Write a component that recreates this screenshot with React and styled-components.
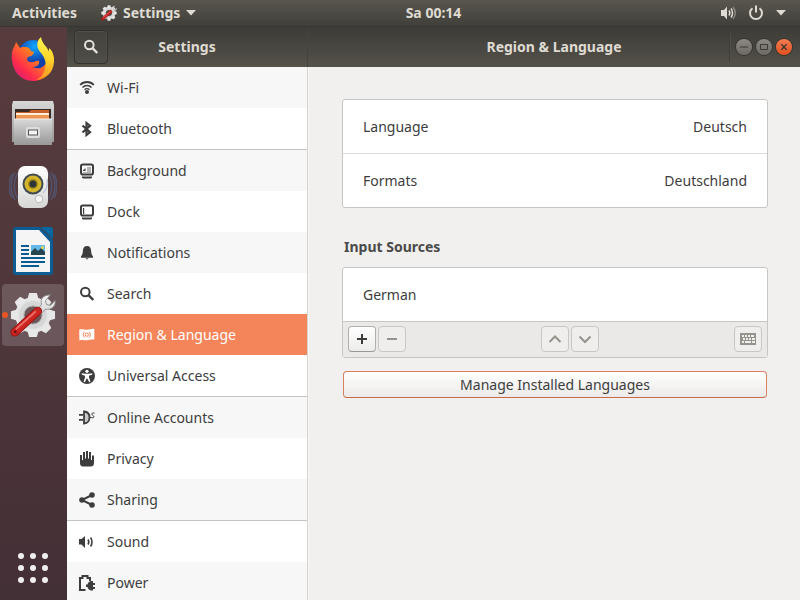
import React from "react";
import styled, { createGlobalStyle, css } from "styled-components";

const GlobalStyle = createGlobalStyle`
  *, *::before, *::after { box-sizing: border-box; }
  body { margin: 0; overflow: hidden; }
  body, button { font-family: "Noto Sans", "Open Sans", sans-serif; font-size: 14px; line-height: 20px; color: #3d3d3d; }
  button { margin: 0; padding: 0; border: 0; background: none; }
  a { color: inherit; text-decoration: none; }
  ul { list-style: none; margin: 0; padding: 0; }
  h1, h2 { margin: 0; font-size: 14px; line-height: 20px; }
  svg { display: block; flex: none; }
`;

const Desktop = styled.div`
  height: 100vh;
  display: flex;
  flex-direction: column;
`;

const TopBar = styled.header`
  flex: none;
  height: 27px;
  display: grid;
  grid-template-columns: 67px 1fr auto 1fr;
  align-items: center;
  background: linear-gradient(#59564e, #403f3a);
  border-bottom: 1px solid #383732;
`;

const barItem = css`
  display: flex;
  align-items: center;
  font-size: 14px;
  font-weight: 700;
  color: #dfdbd2;
`;

const BarStart = styled.div`
  grid-column: 1 / 3;
  grid-row: 1;
  display: flex;
  gap: 24px;
  padding-left: 12px;
`;

const BarButton = styled.button`
  ${barItem}
  gap: 6px;
`;

const Clock = styled.button`
  ${barItem}
  grid-column: 3;
  grid-row: 1;
`;

const StatusMenu = styled.button`
  ${barItem}
  grid-column: 4;
  grid-row: 1;
  justify-self: end;
  gap: 12px;
  padding-right: 14px;
`;

const Workspace = styled.div`
  flex: 1;
  min-height: 0;
  display: flex;
`;

const Dock = styled.nav`
  flex: none;
  width: 67px;
  display: flex;
  flex-direction: column;
  justify-content: space-between;
  padding: 1px 3px 17px 2px;
  background: linear-gradient(#573c3d, #4e363a 55%, #432f36);
`;

const DockList = styled.ul`
  display: flex;
  flex-direction: column;
  gap: 2px;
`;

const DockItem = styled.button`
  position: relative;
  width: 62px;
  height: 62px;
  display: grid;
  place-items: center;
  border-radius: 4px;
  background: ${(p) => (p.$active ? "rgba(255, 255, 255, 0.17)" : "none")};
`;

const RunningDot = styled.span`
  position: absolute;
  left: 0;
  top: 28px;
  width: 6px;
  height: 6px;
  border-radius: 3px;
  background: #e95420;
`;

const AppsButton = styled.button`
  align-self: center;
  display: grid;
  grid-template-columns: repeat(3, 6px);
  gap: 6px;
`;

const Dot = styled.span`
  height: 6px;
  border-radius: 3px;
  background: #f0eeee;
`;

const Window = styled.div`
  flex: 1;
  min-width: 0;
  display: grid;
  grid-template-columns: 241px 1fr;
  grid-template-rows: 40px minmax(0, 1fr);
  background: #f1f0ee;
`;

const HeaderPane = styled.div`
  display: grid;
  grid-template-columns: 1fr auto 1fr;
  align-items: center;
  padding: 0 7px;
  color: #dfdbd2;
  background: linear-gradient(#3c3b37, #55524a);
  border-right: ${(p) => (p.$divided ? "1px solid #45433d" : "0")};
`;

const SearchButton = styled.button`
  width: 34px;
  height: 34px;
  display: grid;
  place-items: center;
  border: 1px solid #33322e;
  border-radius: 4px;
  background: linear-gradient(#43423d, #4f4d46);
  box-shadow: inset 0 0 0 1px #504e47;
  color: #e6e2da;
`;

const WindowTitle = styled.h1`
  grid-column: 2;
  font-size: 14px;
  font-weight: 700;
`;

const WindowControls = styled.div`
  justify-self: end;
  display: flex;
  align-items: center;
  gap: 4px;
  height: 28px;
  padding: 0 1px 0 6px;
  border-left: 1px solid #3f3e39;
  box-shadow: inset 1px 0 #504e47;
`;

const ControlButton = styled.button`
  width: 16px;
  height: 16px;
  display: grid;
  place-items: center;
  border-radius: 8px;
  box-shadow: 0 0 0 1px #35342f;
  color: #3a3934;
  background: ${(p) => (p.$close ? "linear-gradient(#f67b52, #e4511d)" : "linear-gradient(#8b8982, #6b6962)")};
`;

const Sidebar = styled.nav`
  min-height: 0;
  overflow: hidden;
  background: #fff;
  border-right: 1px solid #d5d3d0;
`;

const NavGroup = styled.ul`
  & + & { border-top: 1px solid #c6c4c2; }
`;

const NavLink = styled.a`
  height: 41px;
  display: flex;
  align-items: center;
  gap: 12px;
  padding: 0 12px;
  color: ${(p) => (p.$selected ? "#fff" : "#3d3d3d")};
  background: ${(p) => (p.$selected ? "#f4845a" : p.$shaded ? "#f7f7f7" : "#fff")};
`;

const Content = styled.main`
  min-width: 0;
  padding: 32px 32px 0 34px;
  box-shadow: inset 1px 0 #f8f7f6;
`;

const Card = styled.div`
  border: 1px solid #c8c6c4;
  border-radius: 3px;
  background: #fff;
  overflow: hidden;
`;

const CardRow = styled.button`
  width: 100%;
  height: 53px;
  display: flex;
  align-items: center;
  justify-content: space-between;
  padding: 0 20px;

  & + & {
    height: 54px;
    border-top: 1px solid #dddcda;
  }
`;

const SectionTitle = styled.h2`
  margin: 29px 0 10px 2px;
  color: #4a4a4a;
`;

const Toolbar = styled.div`
  display: flex;
  align-items: center;
  justify-content: space-between;
  height: 36px;
  padding: 0 5px 1px;
  border-top: 1px solid #c8c6c4;
  background: #eae9e7;
`;

const ToolGroup = styled.div`
  display: flex;
  gap: 2px;
`;

const ToolButton = styled.button`
  width: 28px;
  height: 26px;
  display: grid;
  place-items: center;
  border: 1px solid #b3afab;
  border-bottom-color: #9b9793;
  border-radius: 4px;
  color: #3d3d3d;
  background: linear-gradient(#fff, #ececea);

  &:disabled {
    border-color: #c9c7c4;
    color: #96928c;
    background: #efeeed;
  }
`;

const ManageButton = styled.button`
  display: block;
  width: calc(100% - 2px);
  height: 27px;
  margin: 13px 1px 0;
  border: 1px solid #d9805f;
  border-bottom-color: #c96a49;
  border-radius: 4px;
  background: linear-gradient(#fff, #ebeae8);
`;

const Icon = ({ size = 16, children }) => (
  <svg width={size} height={size} viewBox="0 0 16 16" fill="currentColor" aria-hidden="true">
    {children}
  </svg>
);

const line = { fill: "none", stroke: "currentColor", strokeWidth: 2 };

const icons = {
  wifi: (
    <>
      <g {...line} strokeWidth="1.8">
        <path d="M1.2 5C4.8 1 11.2 1 14.8 5" />
        <path d="M3.5 7.600C6 4.900 10 4.900 12.5 7.600" strokeWidth="1.5" />
        <path d="M5.500 9.800C7 8.400 9 8.400 10.500 9.800" strokeWidth="1.3" />
      </g>
      <circle cx="8" cy="12" r="2" />
    </>
  ),
  bluetooth: <path d="M3.500 4.500 11 11.300 7.500 14V2L11 4.700 3.500 11.500" {...line} strokeWidth="2.200" />,
  background: (
    <>
      <rect x="2" y="1.500" width="12" height="10" rx="1.800" {...line} />
      <path d="M3 13.500h10v1l-1 1H4l-1-1z" />
      <path d="M8 4h4v6H4V9h4z" opacity=".35" />
      <path d="M4 7.500 6.500 5v3H4z" />
    </>
  ),
  dock: (
    <>
      <rect x="2" y="1.500" width="12" height="10" rx="1.800" {...line} />
      <path d="M4 4h1.200v6H4z" />
      <path d="M3 13.500h10v1l-1 1H4l-1-1z" />
    </>
  ),
  bell: <path d="M8 1C5.200 1 4.100 3 3.900 5.800 3.700 8.600 3.300 10.200 2 11.200V12.800H14V11.200C12.700 10.200 12.300 8.600 12.100 5.800 11.900 3 10.800 1 8 1zM6.500 13.300h3c-.3.800-.8 1.100-1.500 1.100s-1.200-.3-1.500-1.100z" />,
  search: (
    <>
      <circle cx="6.300" cy="6" r="4.300" {...line} />
      <path d="m9.500 9.200 4.800 4.800" {...line} strokeWidth="2.400" />
    </>
  ),
  region: (
    <>
      <path d="M.3 2.600C3 1.600 5 2.800 8 2.800s4.500-1.400 7.300-.8v10.800c-2.800-.6-4.300.4-7.300.4s-5-.8-7.700.3z" />
      <g fill="none" stroke="#f4845a">
        <circle cx="7.800" cy="7.700" r="1.600" />
        <path d="M5.600 4.800A3.900 3.900 0 0 0 5.600 10.600M10 4.800a3.900 3.900 0 0 1 0 5.800" />
      </g>
    </>
  ),
  access: (
    <>
      <circle cx="8" cy="8" r="8" />
      <circle cx="8" cy="3.300" r="1.600" fill="#fff" />
      <path d="M2.800 5.300 6.500 5.800h3l3.700-.5.200 1.200-3.400 1.200v1.800l1.500 4.200-1.300.5L8.300 10.500h-.6l-1.900 3.700-1.300-.5L6 9.500V7.700L2.600 6.500z" fill="#fff" />
    </>
  ),
  online: (
    <>
      <path d="M0 4h4v1.700H0zM0 9h4v1.700H0z" />
      <path d="M5 1.500v12c3.700-.3 5.500-2.800 5.500-6S8.700 1.800 5 1.500z" fillOpacity=".25" stroke="currentColor" strokeWidth="1.800" />
      <path d="M10.500 7.500h1.500M15.600 3.200c-2-.8-3 .1-2.700 1.300.3 1 2 1 2 2.200 0 1.200-1.400 1.500-2.800.8" fill="none" stroke="currentColor" />
    </>
  ),
  privacy: <path d="M1 4h2v5h1V1h2v6.500h1V0h2v7.500h1V1h2v8h1V4.500h2V12c0 2-1 3.500-3 3.500H4c-2 0-3-1.500-3-3.200z" />,
  sharing: (
    <>
      <path d="M13 3 3 8l10 5" {...line} />
      <circle cx="13" cy="3" r="2.800" />
      <circle cx="3" cy="8" r="2.800" />
      <circle cx="13" cy="13" r="2.800" />
    </>
  ),
  sound: (
    <>
      <path d="M0 5h2.500L6 2v12l-3.500-3.500H0z" />
      <path d="M9 5.500c1 1.500 1 3.500 0 5M11.500 3.500c2 2.500 2 6.500 0 9" {...line} strokeWidth="1.600" />
    </>
  ),
  power: (
    <>
      <path d="M6.500 15H1V3h2.500V1h5v2H11v3" {...line} />
      <path d="M7 9.500h1.500C9 7.500 10.500 6 12.500 6H14v2h2v2h-2v2h2v2h-2v1.500h-1.500c-2 0-3.500-1.500-4-3.500H7z" />
    </>
  ),
};

const GearTool = ({ size }) => (
  <svg width={size} height={size} viewBox="0 0 48 48" aria-hidden="true">
    <defs>
      <linearGradient id="gear" x2="0" y2="1"><stop stopColor="#f8f8f8" /><stop offset="1" stopColor="#d0d0d0" /></linearGradient>
    </defs>
    <circle cx="24" cy="24" r="14" fill="none" stroke="#e4e4e4" strokeWidth="9" />
    <g fill="#e8e8e8">
      {[0, 45, 90, 135, 180, 225, 270, 315].map((a) => (
        <path key={a} d="M18 8 20 1h8l2 7z" transform={`rotate(${a} 24 24)`} />
      ))}
    </g>
    <circle cx="24" cy="24" r="12" fill="none" stroke="#d6d6d6" strokeWidth="5" />
    <circle cx="24" cy="24" r="9.500" fill="none" stroke="#aaa" />
    <path d="M28 19 33 13c-2-6 2-10 9-10l-5 6 1 4 4 1 5-5c1 6-4 10-10 9l-6 6z" fill="url(#gear)" stroke="#8d8d8d" />
    <path d="M5 42 29 20" fill="none" stroke="#941414" strokeWidth="9" strokeLinecap="round" />
    <path d="M5 42 29 20" fill="none" stroke="#cb2421" strokeWidth="7" strokeLinecap="round" />
    <path d="M27 20 6 39" stroke="#ee6e65" strokeWidth="2" />
    <circle cx="5.500" cy="41.500" r="1.600" fill="#6b1515" />
  </svg>
);

const Firefox = () => (
  <svg width="46" height="46" viewBox="0 0 46 46" aria-hidden="true">
    <defs>
      <linearGradient id="fox" x1="0" y1="1" x2="1" y2="0"><stop stopColor="#c0168c" /><stop offset=".3" stopColor="#ff2c4b" /><stop offset=".65" stopColor="#ff8a1c" /><stop offset="1" stopColor="#ffe226" /></linearGradient>
      <linearGradient id="tail" x2="0" y2="1"><stop stopColor="#fff44f" /><stop offset=".5" stopColor="#ffd52c" /><stop offset="1" stopColor="#ff9520" /></linearGradient>
      <radialGradient id="globe" cx=".55" cy=".2"><stop stopColor="#10a8ff" /><stop offset="1" stopColor="#113fa8" /></radialGradient>
    </defs>
    <circle cx="23" cy="20" r="16" fill="url(#globe)" />
    <path d="M2 24C1 17 3 12 5 9l1-3 4 6c3-2 6-1 9 0l2 3 3 1c-1 4-3 4-6 5-2 3 0 5 3 5 3 1 5-2 8-1 1 3-2 6-6 6 5 3 13 1 14-8 1-7-6-11-6-16 4 2 9 8 12 18 1 10-8 20-20 20S3 36 2 24z" fill="url(#fox)" />
    <path d="M31 1c-5 4-5 11 0 16 5 6 6 13 3 19-1 3-4 6-8 8 12-1 19-10 18-22-1-5-2-8-5-10v4c-2-6-7-8-8-15z" fill="url(#tail)" />
  </svg>
);

const Files = () => (
  <svg width="44" height="46" viewBox="0 0 44 46" aria-hidden="true">
    <defs>
      <linearGradient id="cabinet" x2="0" y2="1"><stop stopColor="#d8d8d8" /><stop offset="1" stopColor="#989898" /></linearGradient>
    </defs>
    <path d="M2 1h40l1 4v37H1V5z" fill="url(#cabinet)" />
    <path d="M4 9h36v12H4z" fill="#3a2a22" />
    <path d="M5 12h13l2-2h18v10H5z" fill="#c8622a" />
    <path d="M5 13h33v2H5z" fill="#fff0dc" />
    <path d="M5 15h33v4H5z" fill="#ee9450" />
    <path d="M3 19h38v26H3z" fill="url(#cabinet)" />
    <path d="M3 19h38" stroke="#eee" />
    <rect x="15" y="27" width="14" height="11" rx="2" fill="#ddd" />
    <rect x="17.500" y="30" width="9" height="5" fill="#f4f4f4" stroke="#555" />
  </svg>
);

const Rhythmbox = () => (
  <svg width="48" height="46" viewBox="0 0 48 46" aria-hidden="true">
    <defs>
      <linearGradient id="speaker" x2="0" y2="1"><stop stopColor="#fff" /><stop offset="1" stopColor="#d6d6d4" /></linearGradient>
    </defs>
    <g fill="none" stroke="#5272a8" strokeWidth="1.500" opacity=".45">
      <path d="M9 9c-5 8-5 18 0 26M6 8c-5 9-5 19 0 28M3 10c-4 8-4 16 0 24M39 9c5 8 5 18 0 26M42 8c5 9 5 19 0 28M45 10c4 8 4 16 0 24" />
    </g>
    <rect x="9" y="2" width="30" height="42" rx="7" fill="url(#speaker)" />
    <circle cx="24" cy="20" r="10.500" fill="#424b51" />
    <circle cx="24" cy="20" r="8.500" fill="#d3b62d" />
    <circle cx="24" cy="20" r="5" fill="#a5880f" />
    <circle cx="24" cy="20" r="3.500" fill="#2c343c" />
    <circle cx="30" cy="35" r="3.800" fill="#f4f4f4" stroke="#bbb" />
    <rect x="14" y="33" width="5" height="5" rx="1" fill="#ddd" />
    <path d="M34 29c4-4 5-9 4-14" fill="none" stroke="#b9c6dc" strokeWidth="1.500" />
  </svg>
);

const Writer = () => (
  <svg width="40" height="48" viewBox="0 0 40 48" aria-hidden="true">
    <path d="M3 0h24l13 13v32q0 3-3 3H3q-3 0-3-3V3q0-3 3-3z" fill="#0d5c93" />
    <path d="M28 0h9q3 0 3 3v9z" fill="#0369a3" />
    <path d="M3 3h23l11 12v30H3z" fill="#f5f5f5" />
    <path d="M8 19h8M8 23h8M8 27h8M8 31h24M8 35h24M8 39h18" stroke="#085b93" strokeWidth="2" />
    <path d="M18 18h14v10H18z" fill="#66b8e8" />
    <path d="m18 28v-3l4-4 3 3 3-3 4 4v3z" fill="#26444f" />
    <circle cx="29.500" cy="20.500" r="1.500" fill="#f4d94c" />
  </svg>
);

const Caret = () => (
  <svg width="10" height="6" viewBox="0 0 10 6" fill="#dfdbd2" aria-hidden="true"><path d="M0 0h10L5 5.500z" /></svg>
);

const groups = [
  [["Wi-Fi", "wifi"], ["Bluetooth", "bluetooth"]],
  [["Background", "background"], ["Dock", "dock"], ["Notifications", "bell"], ["Search", "search"], ["Region & Language", "region"], ["Universal Access", "access"]],
  [["Online Accounts", "online"], ["Privacy", "privacy"], ["Sharing", "sharing"]],
  [["Sound", "sound"], ["Power", "power"]],
];

const shaded = new Set(["Wi-Fi", "Background", "Notifications", "Online Accounts", "Sharing", "Power"]);

const apps = [
  ["Firefox", <Firefox />],
  ["Files", <Files />],
  ["Rhythmbox", <Rhythmbox />],
  ["LibreOffice Writer", <Writer />],
  ["Settings", <GearTool size={46} />],
];

export default function App() {
  return (
    <>
      <GlobalStyle />
      <Desktop>
        <TopBar>
          <BarStart>
            <BarButton>Activities</BarButton>
            <BarButton><GearTool size={16} />Settings<Caret /></BarButton>
          </BarStart>
          <Clock>Sa 00:14</Clock>
          <StatusMenu aria-label="System menu">
            <Icon>
              <path d="M1 5h3l3-3.500v13L4 11H1z" />
              <path d="M9 5.500c1 1.500 1 3.500 0 5M11 3.500c2 2.500 2 6.500 0 9" {...line} strokeWidth="1.500" />
              <path d="M13 2c3 3.500 3 8.500 0 12" {...line} strokeWidth="1.500" opacity=".4" />
            </Icon>
            <Icon><path d="M4.500 3.200a6 6 0 1 0 7 0M8 .5v7" {...line} /></Icon>
            <Caret />
          </StatusMenu>
        </TopBar>
        <Workspace>
          <Dock aria-label="Dock">
            <DockList>
              {apps.map(([name, art]) => (
                <li key={name}>
                  <DockItem aria-label={name} $active={name === "Settings"}>
                    {name === "Settings" && <RunningDot />}
                    {art}
                  </DockItem>
                </li>
              ))}
            </DockList>
            <AppsButton aria-label="Show applications">
              {Array.from({ length: 9 }, (_, i) => <Dot key={i} />)}
            </AppsButton>
          </Dock>
          <Window>
            <HeaderPane $divided>
              <SearchButton aria-label="Search"><Icon>{icons.search}</Icon></SearchButton>
              <WindowTitle as="div">Settings</WindowTitle>
            </HeaderPane>
            <HeaderPane>
              <span />
              <WindowTitle>Region &amp; Language</WindowTitle>
              <WindowControls>
                <ControlButton aria-label="Minimize"><Icon><path d="M4 7.500h8v1H4z" /></Icon></ControlButton>
                <ControlButton aria-label="Maximize"><Icon><path d="M4.500 5.500h7v5h-7z" {...line} strokeWidth="1" /></Icon></ControlButton>
                <ControlButton aria-label="Close" $close><Icon><path d="m5.300 5.300 5.400 5.400m0-5.400-5.400 5.400" {...line} strokeWidth="1.400" /></Icon></ControlButton>
              </WindowControls>
            </HeaderPane>
            <Sidebar aria-label="Settings panels">
              {groups.map((group, i) => (
                <NavGroup key={i}>
                  {group.map(([label, icon]) => (
                    <li key={label}>
                      <NavLink href="#" $selected={icon === "region"} $shaded={shaded.has(label)}>
                        <Icon>{icons[icon]}</Icon>
                        {label}
                      </NavLink>
                    </li>
                  ))}
                </NavGroup>
              ))}
            </Sidebar>
            <Content>
              <Card>
                <CardRow><span>Language</span><span>Deutsch</span></CardRow>
                <CardRow><span>Formats</span><span>Deutschland</span></CardRow>
              </Card>
              <SectionTitle>Input Sources</SectionTitle>
              <Card>
                <CardRow>German</CardRow>
                <Toolbar>
                  <ToolGroup>
                    <ToolButton aria-label="Add"><Icon><path d="M3 8h10M8 3v10" {...line} /></Icon></ToolButton>
                    <ToolButton aria-label="Remove" disabled><Icon><path d="M3 8h10" {...line} /></Icon></ToolButton>
                  </ToolGroup>
                  <ToolGroup>
                    <ToolButton aria-label="Move up" disabled><Icon><path d="m2.500 11 5.500-5.500 5.500 5.500" {...line} /></Icon></ToolButton>
                    <ToolButton aria-label="Move down" disabled><Icon><path d="m2.500 5.500 5.500 5.500 5.500-5.500" {...line} /></Icon></ToolButton>
                  </ToolGroup>
                  <ToolButton aria-label="Keyboard layout" disabled>
                    <Icon>
                      <path d="M0 2h16v12H0z" />
                      <path d="M2 5h12M3 8h12M2 11h2m1 0h6m1 0h3" stroke="#efeeed" strokeWidth="2" />
                      <path d="M4.500 4v2m3-2v2m3-2v2M5.500 7v2m3-2v2m3-2v2" stroke="currentColor" />
                    </Icon>
                  </ToolButton>
                </Toolbar>
              </Card>
              <ManageButton>Manage Installed Languages</ManageButton>
            </Content>
          </Window>
        </Workspace>
      </Desktop>
    </>
  );
}
